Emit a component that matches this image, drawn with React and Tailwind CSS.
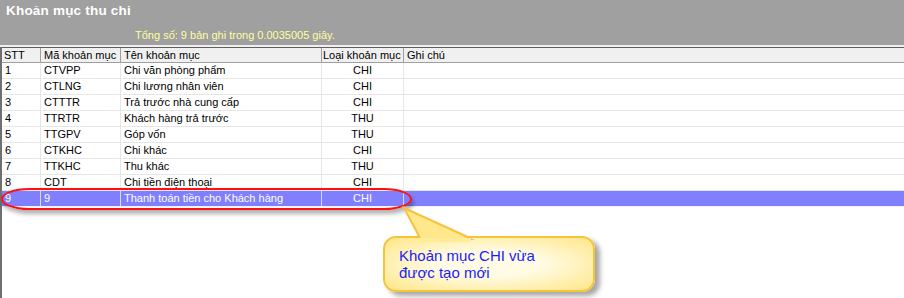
import React from 'react'

const rows = [
  ['1', 'CTVPP', 'Chi văn phòng phẩm', 'CHI'],
  ['2', 'CTLNG', 'Chi lương nhân viên', 'CHI'],
  ['3', 'CTTTR', 'Trả trước nhà cung cấp', 'CHI'],
  ['4', 'TTRTR', 'Khách hàng trả trước', 'THU'],
  ['5', 'TTGPV', 'Góp vốn', 'THU'],
  ['6', 'CTKHC', 'Chi khác', 'CHI'],
  ['7', 'TTKHC', 'Thu khác', 'THU'],
  ['8', 'CDT', 'Chi tiền điện thoại', 'CHI'],
]

const cols = 'grid grid-cols-[39px_80px_201px_82px_1fr]'

function Row({ r, selected }) {
  const line = selected ? 'border-[#d8d8ff]' : 'border-[#e6e6e6]'
  return (
    <div
      className={`${cols} h-[16px] leading-[15px] border-b ${
        selected ? 'bg-[#8080ff] text-white border-[#f0f0ff]' : 'text-black border-[#e6e6e6]'
      }`}
    >
      <div className={`pl-[3px] border-r ${line}`}>{r[0]}</div>
      <div className={`pl-[3px] border-r ${line}`}>{r[1]}</div>
      <div className={`pl-[3px] border-r ${line}`}>{r[2]}</div>
      <div className={`text-center border-r ${line}`}>{r[3]}</div>
      <div></div>
    </div>
  )
}

export default function App() {
  return (
    <div className="relative w-[904px] h-[298px] overflow-hidden bg-white font-['Liberation_Sans',Arial,sans-serif] text-[11px]">
      <div className="h-[45px] bg-[#a0a0a0]">
        <div className="pl-[6px] pt-[2px] leading-[18px] text-[13.5px] font-bold tracking-[0.2px] text-white">Khoản mục thu chi</div>
        <div className="pl-[135px] mt-[8px] leading-[14px] text-[#ffff9c]">
          Tổng số: 9 bản ghi trong 0.0035005 giây.
        </div>
      </div>
      <div className="h-[2px] bg-[#f0f0f0]" />
      <div className="h-[251px] border-l-2 border-[#707070]">
        <div className={`${cols} h-[16px] leading-[15px] bg-[#f0f0f0] border-t border-[#606060] border-b-[#a0a0a0] border-b`}>
          <div className="pl-[2px] border-r border-[#a0a0a0]">STT</div>
          <div className="pl-[3px] border-r border-[#a0a0a0]">Mã khoản mục</div>
          <div className="pl-[3px] border-r border-[#a0a0a0]">Tên khoản mục</div>
          <div className="pl-[1px] border-r border-[#a0a0a0]">Loại khoản mục</div>
          <div className="pl-[3px]">Ghi chú</div>
        </div>
        {rows.map((r) => (
          <Row key={r[0]} r={r} />
        ))}
        <Row r={['9', '9', 'Thanh toán tiền cho Khách hàng', 'CHI']} selected />
      </div>

      {/* red highlight around new row */}
      <div className="absolute left-[1px] top-[188px] w-[411px] h-[22px] border-2 border-[#ff1010] rounded-[28px/11px] shadow-[2px_4px_4px_rgba(0,0,0,0.3)]" />

      {/* callout */}
      <div className="absolute left-[383px] top-[236px] w-[212px] h-[56px] rounded-[13px] border-2 border-[#f6c33c] bg-[radial-gradient(ellipse_at_center,#fffbe4_35%,#ffe684_100%)] shadow-[5px_4px_5px_rgba(0,0,0,0.35)] pl-[14px] pt-[9px] text-[15px] leading-[17px] text-[#1c1cff]">
        Khoản mục CHI vừa
        <br />
        được tạo mới
      </div>
      <svg className="absolute left-[398px] top-[204px]" width="80" height="40" viewBox="0 0 80 40">
        <polygon points="8,5 74,34 30,34" fill="#000" opacity="0.18" transform="translate(3,2)" />
        <polygon points="6,4 72,35 22,35" fill="#ffe88c" />
        <polyline points="22,34 6,4 72,34" fill="none" stroke="#f6c33c" strokeWidth="2" />
        <rect x="21" y="34" width="52" height="4" fill="#ffeb9a" />
      </svg>
    </div>
  )
}
